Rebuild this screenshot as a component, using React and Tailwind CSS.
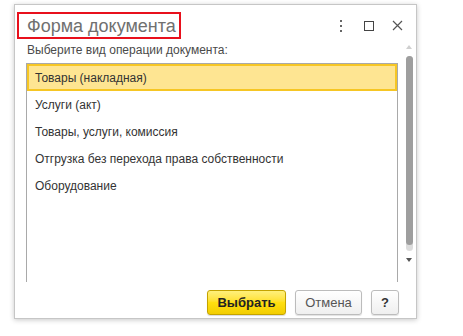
const items = [
  'Товары (накладная)',
  'Услуги (акт)',
  'Товары, услуги, комиссия',
  'Отгрузка без перехода права собственности',
  'Оборудование',
]

function Kebab() {
  return (
    <svg width="4" height="12" viewBox="0 0 4 12">
      <rect x="1" y="0" width="2" height="2" fill="#666" />
      <rect x="1" y="5" width="2" height="2" fill="#666" />
      <rect x="1" y="10" width="2" height="2" fill="#666" />
    </svg>
  )
}

export default function App() {
  return (
    <div className="w-[463px] h-[336px] bg-white pt-[4px] pl-[14px] font-['Liberation_Sans',Arial,sans-serif]">
      <div className="w-[403px] h-[315px] border border-[#c6c6c6] bg-white shadow-[0_1px_5px_rgba(0,0,0,0.22)] flex flex-col">
        {/* header */}
        <div className="flex items-center pt-[7px] pl-[2px] pr-[4px]">
          <div className="h-[27px] w-[164px] border-2 border-[#e8101c] pl-[8px] flex items-center text-[18px] text-[#707070] leading-none">
            Форма документа
          </div>
          <div className="ml-auto flex items-center">
            <div className="w-[28px] h-[20px] flex items-center justify-center"><Kebab /></div>
            <div className="w-[28px] h-[20px] flex items-center justify-center">
              <div className="w-[10px] h-[10px] border-[1.5px] border-[#444]" />
            </div>
            <div className="w-[29px] h-[20px] flex items-center justify-center">
              <svg width="11" height="11" viewBox="0 0 11 11">
                <path d="M1 1L10 10M10 1L1 10" stroke="#555" strokeWidth="1.2" />
              </svg>
            </div>
          </div>
        </div>

        {/* body */}
        <div className="flex pl-[11px]">
          <div className="w-[372px] flex flex-col">
            <div className="mt-[4px] h-[14px] pl-[1px] text-[12px] leading-[14px] text-[#4a4a4a]">
              Выберите вид операции документа:
            </div>
            <div className="mt-[6px] h-[219px] border-t border-l border-r border-[#a9a9a9]">
              {items.map((t, i) => (
                <div
                  key={t}
                  className={
                    i === 0
                      ? 'h-[27px] flex items-center px-[6px] border-2 border-[#f6c624] bg-[#fee592] text-[12px] text-[#333]'
                      : 'h-[27px] flex items-center px-[6px] border-2 border-transparent text-[12px] text-[#333]'
                  }
                >
                  {t}
                </div>
              ))}
            </div>
          </div>
          <div className="ml-[7px] w-[8px] flex flex-col items-center pt-[6px]">
            <svg width="6" height="4" viewBox="0 0 6 4">
              <path d="M0 4L3 0L6 4Z" fill="#cfcfcf" />
            </svg>
            <div className="mt-[7px] w-[7px] h-[195px] rounded-full bg-[#dcdcdc] flex flex-col">
              <div className="h-[189px] rounded-full bg-[#9e9e9e]" />
            </div>
            <div className="mt-[7px]">
              <svg width="6" height="4" viewBox="0 0 6 4">
                <path d="M0 0L6 0L3 4Z" fill="#555" />
              </svg>
            </div>
          </div>
        </div>

        {/* buttons */}
        <div className="mt-[8px] flex justify-end gap-[9px] pr-[17px]">
          <button className="h-[25px] w-[79px] rounded-[3px] border border-[#c4a300] bg-gradient-to-b from-[#fff07a] via-[#ffdf10] to-[#f2cd00] text-[13px] font-bold text-[#222] shadow-[0_1px_1px_rgba(0,0,0,0.15)]">
            Выбрать
          </button>
          <button className="h-[25px] w-[67px] rounded-[3px] border border-[#bcbcbc] bg-gradient-to-b from-white to-[#efefef] text-[13px] text-[#555] shadow-[0_1px_1px_rgba(0,0,0,0.12)]">
            Отмена
          </button>
          <button className="h-[25px] w-[28px] rounded-[3px] border border-[#bcbcbc] bg-gradient-to-b from-white to-[#efefef] text-[13px] font-bold text-[#333] shadow-[0_1px_1px_rgba(0,0,0,0.12)]">
            ?
          </button>
        </div>
      </div>
    </div>
  )
}
